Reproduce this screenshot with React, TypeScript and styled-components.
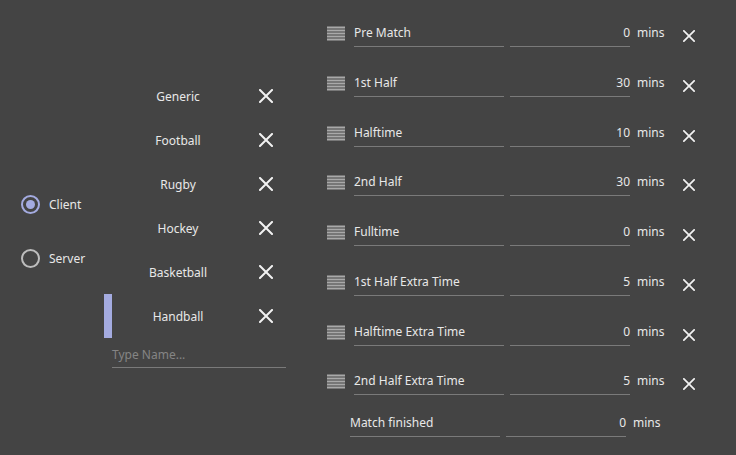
import React from "react";
import styled, { createGlobalStyle } from "styled-components";

const Global = createGlobalStyle`
  html, body { margin: 0; padding: 0; background: #444444; }
  * { box-sizing: border-box; }
`;

const Root = styled.div`
  width: 736px;
  height: 455px;
  background: #444444;
  display: flex;
  font-family: "Noto Sans", "Open Sans", sans-serif;
  font-size: 12px;
  color: #e8e8e8;
  overflow: hidden;
`;

/* Left: radios */
const LeftPane = styled.div`
  width: 104px;
  padding: 195px 0 0 21px;
  display: flex;
  flex-direction: column;
  gap: 36px;
`;

const RadioRow = styled.label`
  display: flex;
  align-items: center;
  gap: 9px;
  height: 18px;
`;

const RadioCircle = styled.span<{ $on?: boolean }>`
  width: 19px;
  height: 19px;
  border-radius: 50%;
  border: 2px solid ${(p) => (p.$on ? "#a4abe0" : "#bdbdbd")};
  display: flex;
  align-items: center;
  justify-content: center;
  &::after {
    content: "";
    width: 9px;
    height: 9px;
    border-radius: 50%;
    background: ${(p) => (p.$on ? "#a4abe0" : "transparent")};
  }
`;

/* Middle: sports list */
const MidPane = styled.div`
  width: 216px;
  padding-top: 74px;
  display: flex;
  flex-direction: column;
`;

const SportRow = styled.div`
  height: 44px;
  display: flex;
  align-items: stretch;
`;

const SelBar = styled.div<{ $on?: boolean }>`
  width: 8px;
  background: ${(p) => (p.$on ? "#a4abe0" : "transparent")};
`;

const SportLabel = styled.div`
  width: 132px;
  display: flex;
  align-items: center;
  justify-content: center;
`;

const SportX = styled.div`
  width: 44px;
  display: flex;
  align-items: center;
  justify-content: center;
`;

const NameInput = styled.div`
  margin: 2px 0 0 8px;
  width: 174px;
  height: 28px;
  border-bottom: 1px solid #7a7a7a;
  display: flex;
  align-items: center;
  padding-top: 2px;
  color: #858585;
`;

/* Right: periods */
const RightPane = styled.div`
  flex: 1;
  padding: 7px 0 0 2px;
  display: flex;
  flex-direction: column;
`;

const PeriodRow = styled.div<{ $plain?: boolean }>`
  height: 50px;
  display: flex;
  align-items: flex-start;
  padding-top: ${(p) => (p.$plain ? "9px" : "17px")};
  padding-left: ${(p) => (p.$plain ? "28px" : "0")};
`;

const Handle = styled.div`
  width: 32px;
  padding: 2px 0 0 5px;
`;

const Field = styled.div<{ $w: number; $right?: boolean }>`
  width: ${(p) => p.$w}px;
  height: 23px;
  padding-top: 1px;
  border-bottom: 1px solid #7a7a7a;
  display: flex;
  justify-content: ${(p) => (p.$right ? "flex-end" : "flex-start")};
  line-height: 16px;
`;

const Gap = styled.div<{ $w: number }>`
  width: ${(p) => p.$w}px;
`;

const Unit = styled.div`
  width: 40px;
  padding: 1px 0 0 7px;
  line-height: 16px;
`;

const RowX = styled.div`
  width: 38px;
  display: flex;
  justify-content: center;
  padding-top: 6px;
`;

const XIcon = ({ size }: { size: number }) => (
  <svg width={size} height={size} viewBox="0 0 14 14">
    <path d="M1 1 L13 13 M13 1 L1 13" stroke="#f2f2f2" strokeWidth="2" strokeLinecap="square" fill="none" />
  </svg>
);

const HandleIcon = () => (
  <svg width="18" height="15" viewBox="0 0 18 15">
    {[0, 3, 6, 9, 12].map((y) => (
      <rect key={y} x="0" y={y + 0.5} width="18" height="2" fill="#a9a9a9" />
    ))}
  </svg>
);

const sports = ["Generic", "Football", "Rugby", "Hockey", "Basketball", "Handball"];
const periods: [string, number][] = [
  ["Pre Match", 0],
  ["1st Half", 30],
  ["Halftime", 10],
  ["2nd Half", 30],
  ["Fulltime", 0],
  ["1st Half Extra Time", 5],
  ["Halftime Extra Time", 0],
  ["2nd Half Extra Time", 5],
];

export default function App() {
  return (
    <Root>
      <Global />
      <LeftPane>
        <RadioRow>
          <RadioCircle $on />
          Client
        </RadioRow>
        <RadioRow>
          <RadioCircle />
          Server
        </RadioRow>
      </LeftPane>
      <MidPane>
        {sports.map((s) => (
          <SportRow key={s}>
            <SelBar $on={s === "Handball"} />
            <SportLabel>{s}</SportLabel>
            <SportX>
              <XIcon size={14} />
            </SportX>
          </SportRow>
        ))}
        <NameInput>Type Name...</NameInput>
      </MidPane>
      <RightPane>
        {periods.map(([name, v]) => (
          <PeriodRow key={name}>
            <Handle>
              <HandleIcon />
            </Handle>
            <Field $w={150}>{name}</Field>
            <Gap $w={6} />
            <Field $w={120} $right>
              {v}
            </Field>
            <Unit>mins</Unit>
            <RowX>
              <XIcon size={12} />
            </RowX>
          </PeriodRow>
        ))}
        <PeriodRow $plain>
          <Field $w={150}>Match finished</Field>
          <Gap $w={6} />
          <Field $w={120} $right>
            0
          </Field>
          <Unit>mins</Unit>
        </PeriodRow>
      </RightPane>
    </Root>
  );
}
